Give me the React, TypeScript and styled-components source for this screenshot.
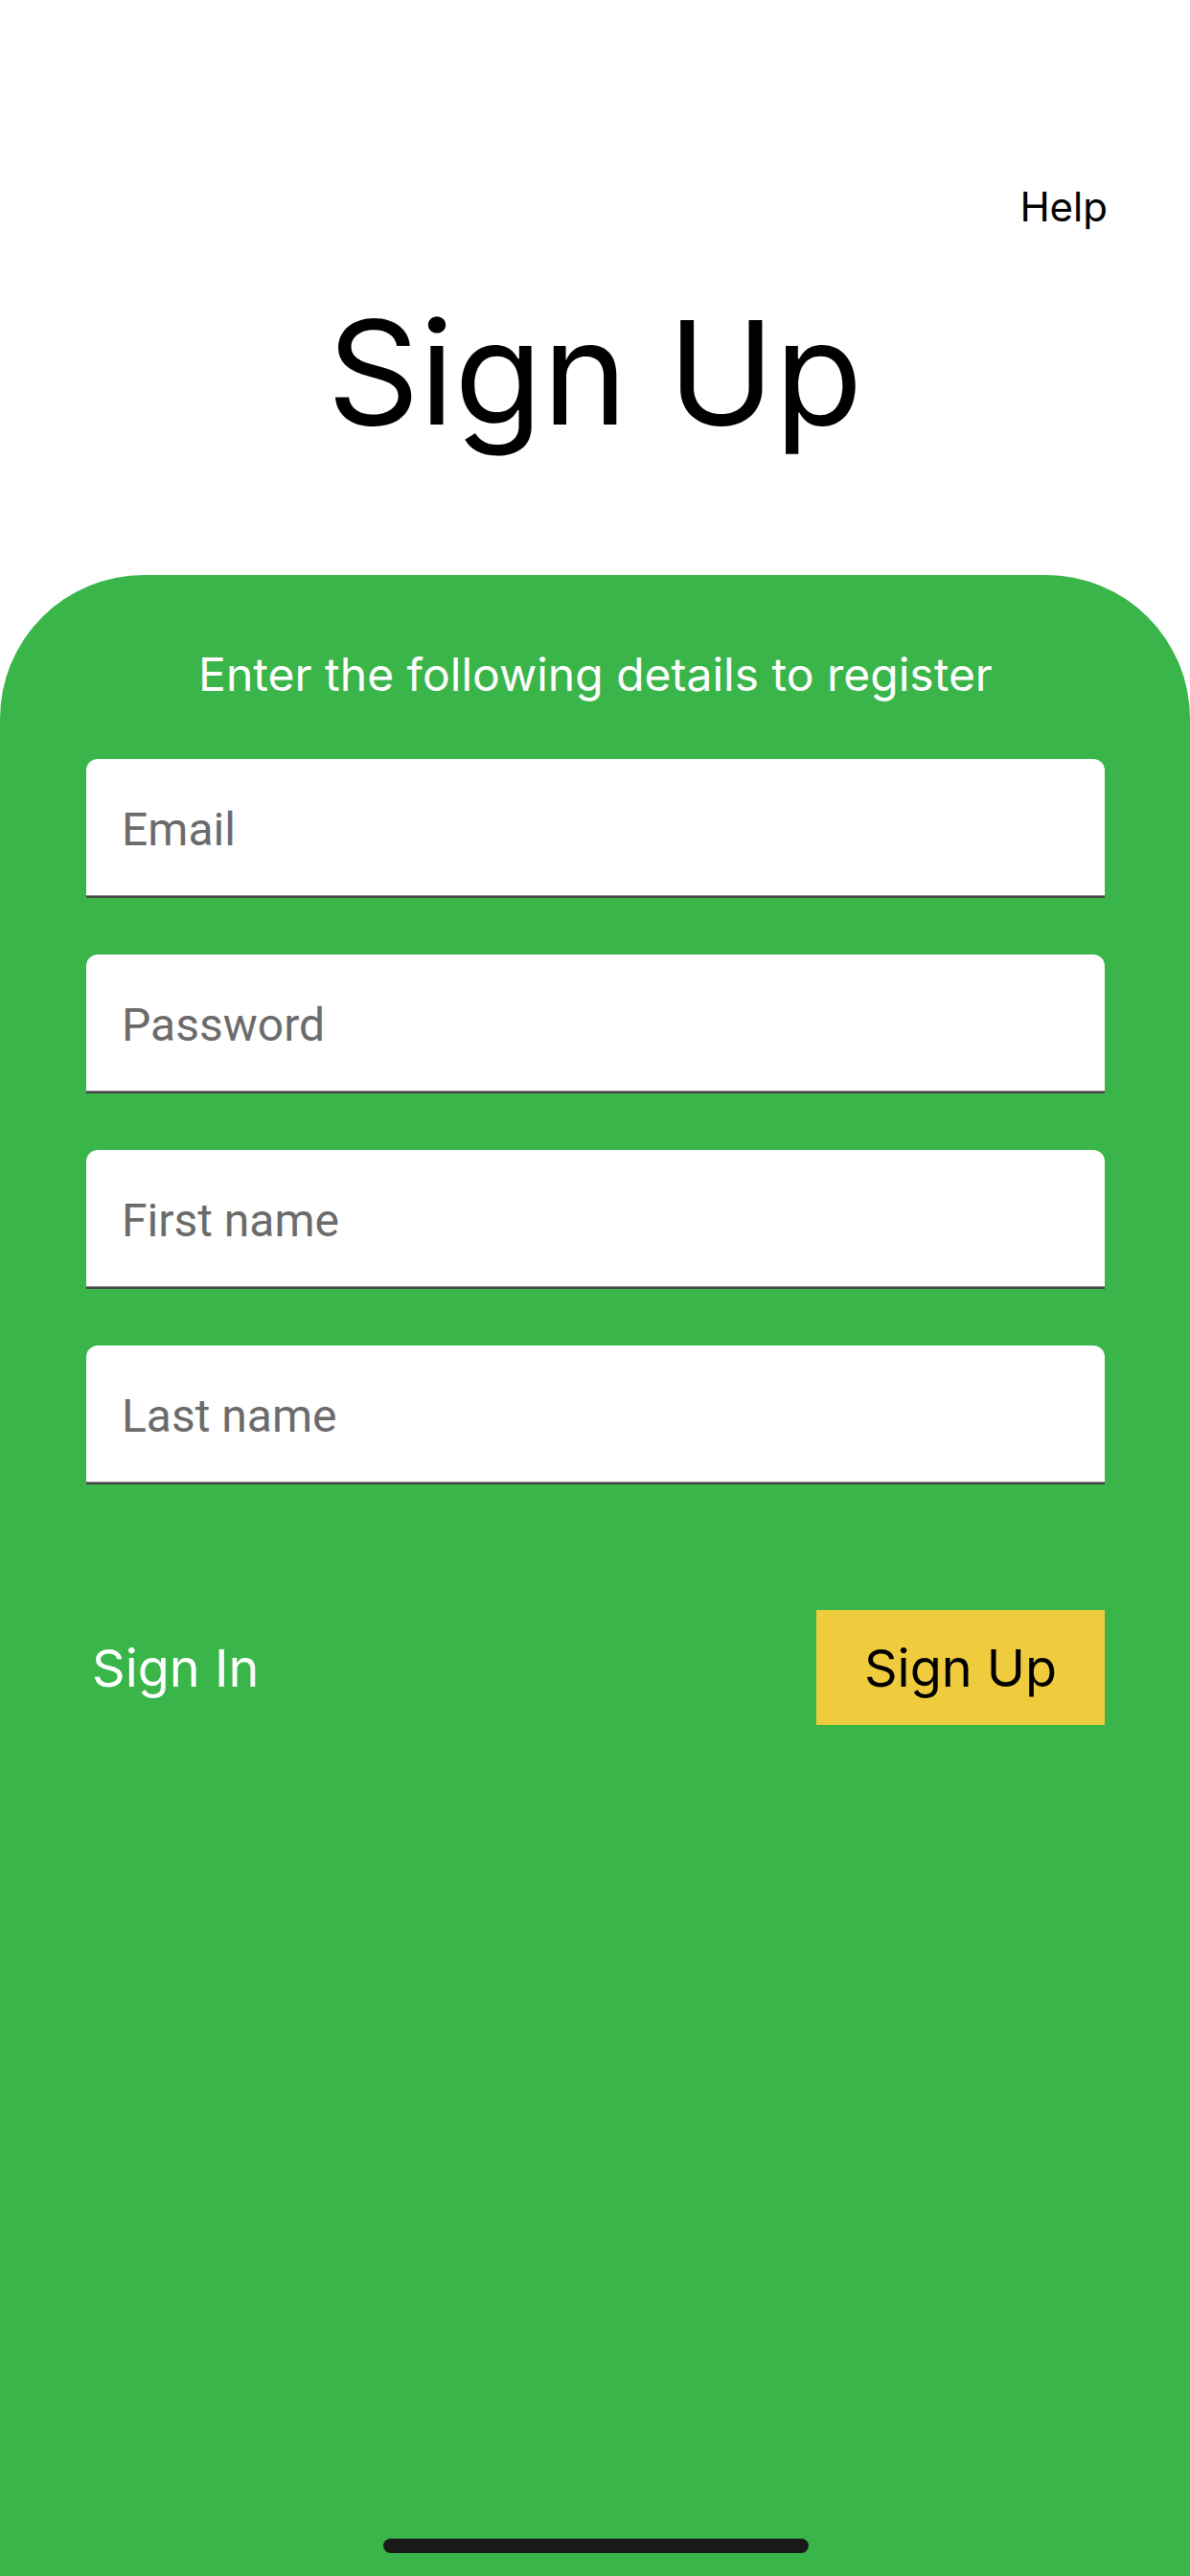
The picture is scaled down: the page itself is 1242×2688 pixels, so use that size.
import React from 'react';
import styled, { createGlobalStyle } from 'styled-components';

// Page is drawn at device pixels (3x of a 414pt wide phone)
const GlobalStyle = createGlobalStyle`
  html, body {
    margin: 0;
    padding: 0;
    background: #ffffff;
  }
  body {
    font-family: Inter, "Noto Sans", "Liberation Sans", sans-serif;
    -webkit-font-smoothing: antialiased;
  }
  * {
    box-sizing: border-box;
  }
`;

const Screen = styled.div`
  display: flex;
  flex-direction: column;
  min-height: 2688px;
  background: #ffffff;
`;

const Header = styled.header`
  display: flex;
  flex-direction: column;
  height: 600px;
  padding: 191px 86px 0;
`;

const HelpLink = styled.button`
  align-self: flex-end;
  padding: 0;
  border: none;
  background: none;
  font-family: inherit;
  font-size: 42px;
  line-height: 50px;
  color: #000000;
  cursor: pointer;
`;

const Title = styled.h1`
  margin: 58px 0 0;
  font-size: 150px;
  line-height: 180px;
  font-weight: 400;
  text-align: center;
  color: #000000;
`;

const Panel = styled.main`
  flex: 1;
  display: flex;
  flex-direction: column;
  padding: 75px 89px 24px 90px;
  background: #3ab54a;
  border-radius: 150px 150px 0 0;
`;

const Subtitle = styled.p`
  margin: 0;
  font-size: 48px;
  line-height: 58px;
  text-align: center;
  color: #ffffff;
`;

const Form = styled.form`
  display: flex;
  flex-direction: column;
  gap: 59px;
  margin-top: 59px;
`;

const Field = styled.input`
  display: block;
  width: 100%;
  height: 145px;
  padding: 3px 37px 0;
  border: none;
  border-bottom: 2px solid #444444;
  box-shadow: inset 0 -1px 0 #8a8a8a;
  border-radius: 12px 12px 0 0;
  background: #ffffff;
  font-family: Roboto, "Liberation Sans", sans-serif;
  font-size: 48px;
  color: #222222;
  outline: none;

  &::placeholder {
    color: #6b6b6b;
  }
`;

const Actions = styled.div`
  display: flex;
  align-items: center;
  justify-content: space-between;
  margin-top: 131px;
`;

const TextButton = styled.button`
  padding: 0 0 0 6px;
  border: none;
  background: none;
  font-family: inherit;
  font-size: 54px;
  color: #ffffff;
  cursor: pointer;
`;

const PrimaryButton = styled.button`
  width: 301px;
  height: 120px;
  padding: 0;
  border: none;
  border-radius: 0;
  background: #efcb3e;
  font-family: inherit;
  font-size: 54px;
  color: #000000;
  cursor: pointer;
`;

const HomeIndicator = styled.div`
  align-self: center;
  width: 444px;
  height: 15px;
  margin-top: auto;
  border-radius: 8px;
  background: #191919;
`;

const fields = [
  { name: 'email', type: 'email', label: 'Email' },
  { name: 'password', type: 'password', label: 'Password' },
  { name: 'firstName', type: 'text', label: 'First name' },
  { name: 'lastName', type: 'text', label: 'Last name' },
];

const App: React.FC = () => {
  return (
    <>
      <GlobalStyle />
      <Screen>
        <Header>
          <HelpLink type="button">Help</HelpLink>
          <Title>Sign Up</Title>
        </Header>
        <Panel>
          <Subtitle>Enter the following details to register</Subtitle>
          <Form onSubmit={(e) => e.preventDefault()}>
            {fields.map((f) => (
              <Field key={f.name} name={f.name} type={f.type} placeholder={f.label} aria-label={f.label} />
            ))}
          </Form>
          <Actions>
            <TextButton type="button">Sign In</TextButton>
            <PrimaryButton type="button">Sign Up</PrimaryButton>
          </Actions>
          <HomeIndicator aria-hidden="true" />
        </Panel>
      </Screen>
    </>
  );
};

export default App;
